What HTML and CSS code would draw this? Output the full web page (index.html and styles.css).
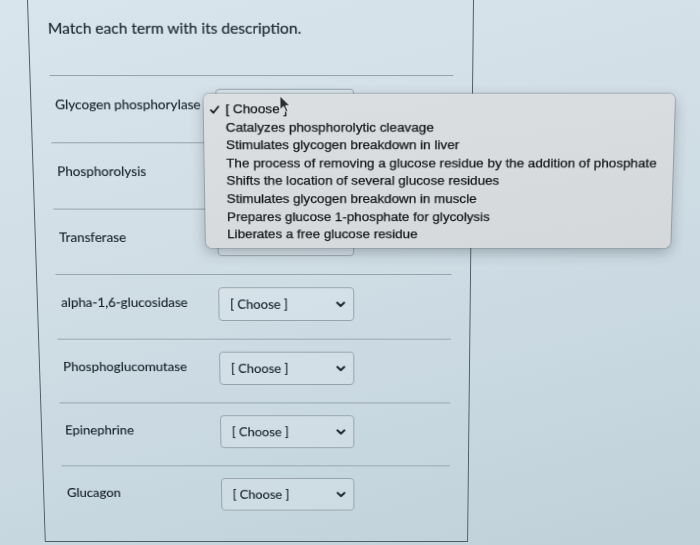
FILE: index.html
```html
<!DOCTYPE html>
<html lang="en">
<head>
<meta charset="utf-8">
<title>Match each term with its description.</title>
<link rel="stylesheet" href="styles.css">
</head>
<body>
<div class="screen">
  <section class="quiz">
    <header class="quiz__prompt">Match each term with its description.</header>

    <div class="match-row">
      <span class="term">Glycogen phosphorylase</span>
      <div class="select-wrap">
        <div class="select">
          <span>[ Choose ]</span>
          <svg class="chevron" width="10" height="7" viewBox="0 0 10 7"><path d="M1.5 1.5 L5 5 L8.5 1.5"/></svg>
        </div>
        <ul class="popup">
          <li class="is-selected">
            <svg class="check" width="10" height="9" viewBox="0 0 10 9"><path d="M1.2 4.8 L3.8 7.6 L8.8 1.2"/></svg>
            [ Choose ]
          </li>
          <li>Catalyzes phosphorolytic cleavage</li>
          <li>Stimulates glycogen breakdown in liver</li>
          <li>The process of removing a glucose residue by the addition of phosphate</li>
          <li>Shifts the location of several glucose residues</li>
          <li>Stimulates glycogen breakdown in muscle</li>
          <li>Prepares glucose 1-phosphate for glycolysis</li>
          <li>Liberates a free glucose residue</li>
          <svg class="pointer" width="12" height="19" viewBox="0 0 12 19"><path d="M1 1 L1 15.5 L4.6 12.2 L7.2 17.8 L9.3 16.9 L6.8 11.4 L11.2 11.4 Z"/></svg>
        </ul>
      </div>
    </div>

    <div class="match-row">
      <span class="term">Phosphorolysis</span>
      <div class="select">
        <span>[ Choose ]</span>
        <svg class="chevron" width="10" height="7" viewBox="0 0 10 7"><path d="M1.5 1.5 L5 5 L8.5 1.5"/></svg>
      </div>
    </div>

    <div class="match-row">
      <span class="term">Transferase</span>
      <div class="select">
        <span>[ Choose ]</span>
        <svg class="chevron" width="10" height="7" viewBox="0 0 10 7"><path d="M1.5 1.5 L5 5 L8.5 1.5"/></svg>
      </div>
    </div>

    <div class="match-row">
      <span class="term">alpha-1,6-glucosidase</span>
      <div class="select">
        <span>[ Choose ]</span>
        <svg class="chevron" width="10" height="7" viewBox="0 0 10 7"><path d="M1.5 1.5 L5 5 L8.5 1.5"/></svg>
      </div>
    </div>

    <div class="match-row">
      <span class="term">Phosphoglucomutase</span>
      <div class="select">
        <span>[ Choose ]</span>
        <svg class="chevron" width="10" height="7" viewBox="0 0 10 7"><path d="M1.5 1.5 L5 5 L8.5 1.5"/></svg>
      </div>
    </div>

    <div class="match-row">
      <span class="term">Epinephrine</span>
      <div class="select">
        <span>[ Choose ]</span>
        <svg class="chevron" width="10" height="7" viewBox="0 0 10 7"><path d="M1.5 1.5 L5 5 L8.5 1.5"/></svg>
      </div>
    </div>

    <div class="match-row">
      <span class="term">Glucagon</span>
      <div class="select">
        <span>[ Choose ]</span>
        <svg class="chevron" width="10" height="7" viewBox="0 0 10 7"><path d="M1.5 1.5 L5 5 L8.5 1.5"/></svg>
      </div>
    </div>
  </section>
</div>
</body>
</html>
```

FILE: styles.css
```css
html, body {
  margin: 0;
  height: 100%;
  overflow: hidden;
}

body {
  background: linear-gradient(165deg, #d9e5ec 0%, #d1dee6 40%, #c7d7e0 75%, #bfd0d9 100%);
  font-family: Lato, "Noto Sans", sans-serif;
  color: #17222a;
}

/* the whole sheet leans back slightly, narrowing toward the bottom */
.screen {
  width: 700px;
  height: 545px;
  transform-origin: 362px 0;
  transform: perspective(1000px) rotateX(-5.6deg);
}

.quiz {
  margin-left: 27px;
  width: 447px;
  height: 575px;
  box-sizing: border-box;
  border: 1px solid #4f5e67;
  border-top: 0;
  padding: 0 19px;
}

.quiz__prompt {
  height: 76px;
  box-sizing: border-box;
  padding-top: 18px;
  font-size: 15.6px;
  line-height: 20px;
  -webkit-text-stroke: 0.15px #17222a;
}

.match-row {
  height: 69px;
  box-sizing: border-box;
  border-top: 1px solid #93a2aa;
  padding: 13px 0 0 5px;
  display: grid;
  grid-template-columns: 162px 140px;
  align-items: start;
}

.term {
  margin-top: 7px;
  font-size: 13.7px;
  line-height: 18px;
  -webkit-text-stroke: 0.15px #17222a;
}

.select-wrap {
  position: relative;
}

.select {
  height: 36px;
  box-sizing: border-box;
  border: 1px solid #95a2a9;
  border-radius: 4px;
  background: rgba(255, 255, 255, 0.14);
  padding: 0 8px 0 11px;
  display: flex;
  align-items: center;
  justify-content: space-between;
  font-size: 13.4px;
  -webkit-text-stroke: 0.15px #17222a;
}

.chevron path {
  fill: none;
  stroke: #1f2a32;
  stroke-width: 2.3;
  stroke-linecap: round;
  stroke-linejoin: round;
}

/* open option list of the first select */
.popup {
  position: absolute;
  left: -12px;
  top: 5px;
  width: 476px;
  margin: 0;
  padding: 7px 0 4px;
  list-style: none;
  background: linear-gradient(170deg, #dcdfe1 0%, #d4d8da 100%);
  border-radius: 6px;
  box-shadow: 0 0 0 1px rgba(70, 80, 88, 0.3), 0 5px 14px rgba(30, 40, 50, 0.3);
  font-family: "Liberation Sans", Arial, sans-serif;
  font-size: 13.7px;
  color: #111518;
  -webkit-text-stroke: 0.25px #111518;
  z-index: 2;
}

.popup li {
  position: relative;
  height: 18.6px;
  line-height: 18.6px;
  padding-left: 22px;
  white-space: nowrap;
}

.check {
  position: absolute;
  left: 6px;
  top: 5px;
}

.check path {
  fill: none;
  stroke: #111518;
  stroke-width: 1.7;
  stroke-linecap: round;
  stroke-linejoin: round;
}

.pointer {
  position: absolute;
  left: 76px;
  top: 1px;
}

.pointer path {
  fill: #2b2f33;
  stroke: #f2f4f5;
  stroke-width: 1;
  stroke-linejoin: round;
}
```
